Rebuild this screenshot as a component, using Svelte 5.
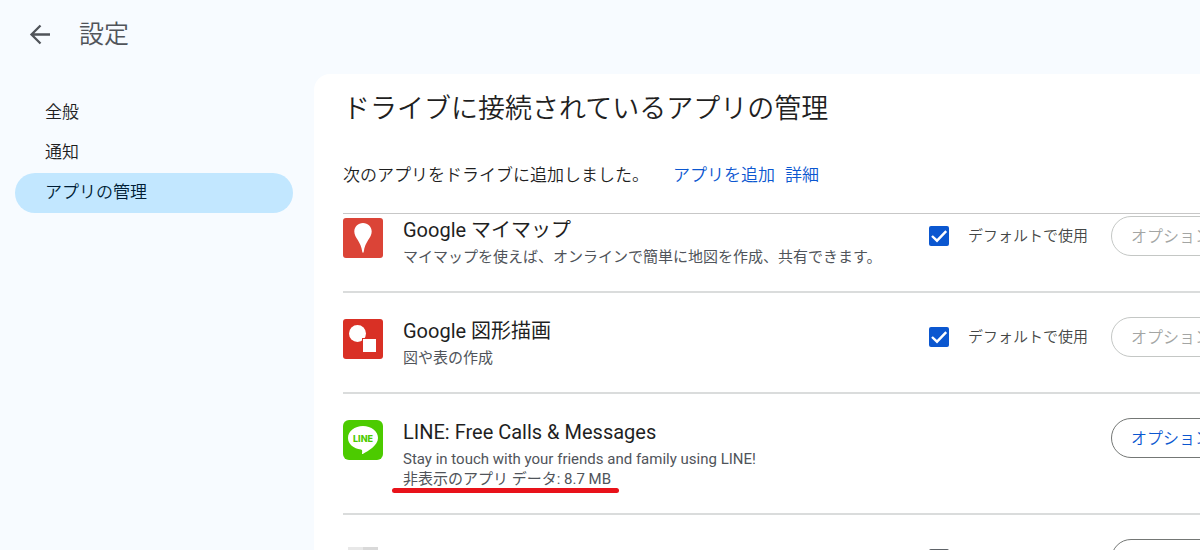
<script>
  const sections = ['全般', '通知', 'アプリの管理'];
  const current = 'アプリの管理';

  let apps = $state([
    {
      id: 'mymaps',
      name: 'Google マイマップ',
      desc: 'マイマップを使えば、オンラインで簡単に地図を作成、共有できます。',
      toggle: true,
      checked: true,
      options: false,
    },
    {
      id: 'drawings',
      name: 'Google 図形描画',
      desc: '図や表の作成',
      toggle: true,
      checked: true,
      options: false,
    },
    {
      id: 'line',
      name: 'LINE: Free Calls & Messages',
      desc: 'Stay in touch with your friends and family using LINE!',
      hidden: '非表示のアプリ データ: 8.7 MB',
      toggle: false,
      options: true,
    },
    { id: 'other', toggle: true, checked: false, options: true },
  ]);
</script>

<div class="page">
  <header class="top">
    <button class="back">
      <svg width="24" height="24" viewBox="0 0 24 24" fill="none" stroke="#50545a" stroke-width="2.300">
        <path d="M22 12.500H3.500M12.500 3.500L3.500 12.500L12.500 21.500" />
      </svg>
    </button>
    <h1>設定</h1>
  </header>

  <div class="body">
    <nav>
      {#each sections as section}
        <a href="#top" class:active={section === current}>{section}</a>
      {/each}
    </nav>

    <main>
      <div class="intro">
        <h2>ドライブに接続されているアプリの管理</h2>
        <p>
          <span>次のアプリをドライブに追加しました。</span>
          <a href="#add">アプリを追加</a>
          <a href="#more">詳細</a>
        </p>
      </div>

      <ul>
        {#each apps as app}
          <li>
            <svg class="icon" width="40" height="40" viewBox="0 0 40 40">
              {#if app.id === 'mymaps'}
                <rect width="40" height="40" rx="3" fill="#db4437" />
                <path d="M20 5C15 5 11.300 8.800 11.300 13.500C11.300 20 18 23 19.300 34C19.400 35 20.600 35 20.700 34C22 23 28.700 20 28.700 13.500C28.700 8.800 25 5 20 5Z" fill="#fff" />
              {:else if app.id === 'drawings'}
                <rect width="40" height="40" rx="3" fill="#d93025" />
                <circle cx="14.500" cy="14.500" r="8.500" fill="#fff" />
                <rect x="19" y="19" width="15" height="15" fill="#d93025" />
                <rect x="20" y="20" width="13" height="13" fill="#fff" />
              {:else if app.id === 'line'}
                <rect width="40" height="40" rx="6" fill="#4ccb00" />
                <path d="M20 6C11.700 6 5 11.200 5 18C5 24 10.500 28.600 18 29.600C19.500 30 19.300 31.200 19 33.500C18.900 34.200 19.500 34.200 20.200 33.800C25 31 35 25.500 35 18C35 11.200 28.300 6 20 6Z" fill="#fff" />
                <text x="20" y="21.500" text-anchor="middle" font-family="Inter, sans-serif" font-size="9" font-weight="800" fill="#4ccb00">LINE</text>
              {:else}
                <rect x="5" y="6" width="15" height="30" fill="#e8e8e8" />
                <rect x="20" y="6" width="15" height="30" fill="#d9d9d9" />
              {/if}
            </svg>

            <div class="info">
              {#if app.name}
                <h3>{app.name}</h3>
                <p>{app.desc}</p>
              {/if}
              {#if app.hidden}
                <p class="marked">{app.hidden}</p>
              {/if}
            </div>

            <div class="default">
              {#if app.toggle}
                <label>
                  <input type="checkbox" bind:checked={app.checked} />
                  {#if app.checked}<span>デフォルトで使用</span>{/if}
                </label>
              {/if}
            </div>

            <button class="options" disabled={!app.options}>オプション</button>
          </li>
        {/each}
      </ul>
    </main>
  </div>
</div>

<style>
  :global(body) {
    margin: 0;
    background: #f7fbff;
  }
  .page {
    box-sizing: border-box;
    height: 100vh;
    display: flex;
    flex-direction: column;
    overflow: hidden;
    background: #f7fbff;
    color: #1f1f1f;
    font-family: Roboto, 'Noto Sans CJK JP', sans-serif;
    font-weight: 350;
  }
  h1, h2, h3, p, ul {
    margin: 0;
    padding: 0;
    font-weight: 350;
  }
  .top {
    display: flex;
    align-items: center;
    gap: 27px;
    height: 70px;
    padding: 0 28px;
    margin-bottom: 4px;
  }
  .back {
    display: flex;
    padding: 0 0 2px;
    border: 0;
    background: none;
  }
  h1 {
    font-size: 25px;
    line-height: 32px;
    color: #50545a;
  }
  .body {
    flex: 1;
    min-height: 0;
    display: flex;
    gap: 21px;
  }
  nav {
    flex: none;
    width: 278px;
    padding: 19px 0 0 15px;
  }
  nav a {
    display: block;
    padding: 0 30px 1px;
    border-radius: 20px;
    font-size: 17px;
    line-height: 39px;
    color: #1f1f1f;
    text-decoration: none;
  }
  nav a.active {
    background: #c2e7ff;
    color: #001d35;
  }
  main {
    flex: 1;
    min-width: 0;
    overflow: hidden;
    padding-left: 29px;
    border-top-left-radius: 16px;
    background: #fff;
  }
  .intro {
    position: relative;
    z-index: 1;
    padding: 15px 0 26px;
    border-bottom: 1px solid #c7c7c7;
    background: #fff;
  }
  h2 {
    margin-bottom: 34px;
    font-size: 27px;
    line-height: 40px;
  }
  .intro p {
    display: flex;
    gap: 10px;
    font-size: 17px;
    line-height: 24px;
  }
  .intro span {
    margin-right: 14px;
  }
  .intro a {
    color: #0b57d0;
    text-decoration: none;
  }
  /* The list is scrolled partly under the intro block. */
  ul {
    margin-top: -22px;
    list-style: none;
  }
  li {
    display: grid;
    grid-template-columns: 40px minmax(506px, 1fr) 162px 140px;
    column-gap: 20px;
    min-height: 50px;
    padding: 24px 24px 24px 0;
    border-bottom: 2px solid #dadcdc;
  }
  .icon {
    margin-top: 2px;
  }
  .info {
    padding-top: 2px;
  }
  h3 {
    margin-bottom: 5px;
    font-size: 20px;
    line-height: 24px;
    font-weight: 400;
  }
  .info p {
    font-size: 15px;
    line-height: 20px;
    font-weight: 400;
    color: #50545a;
  }
  .info .marked {
    position: relative;
    width: fit-content;
  }
  .marked::after {
    content: '';
    position: absolute;
    left: -11px;
    right: -8px;
    bottom: -4px;
    height: 5px;
    border-radius: 3px;
    background: #e8121a;
  }
  label {
    display: flex;
    align-items: center;
    gap: 19px;
    height: 40px;
    font-size: 15px;
    color: #444746;
    white-space: nowrap;
  }
  label span {
    padding-bottom: 3px;
  }
  input {
    appearance: none;
    flex: none;
    width: 20px;
    height: 20px;
    margin: 0;
    border: 2px solid #5f6368;
    border-radius: 2px;
  }
  input:checked {
    border: 0;
    background: #0b57d0 url("data:image/svg+xml,%3Csvg xmlns='http://www.w3.org/2000/svg' viewBox='0 0 20 20'%3E%3Cpath d='M3 10l5 4.700L17.200 5.200' fill='none' stroke='white' stroke-width='2.400'/%3E%3C/svg%3E");
  }
  .options {
    box-sizing: border-box;
    height: 40px;
    padding: 0 19px 3px;
    border: 1px solid #747775;
    border-radius: 20px;
    background: #fff;
    color: #0b57d0;
    font: inherit;
    font-size: 16px;
    text-align: left;
  }
  .options:disabled {
    border-color: #c4c7c5;
    color: #a3a5a4;
  }
</style>
